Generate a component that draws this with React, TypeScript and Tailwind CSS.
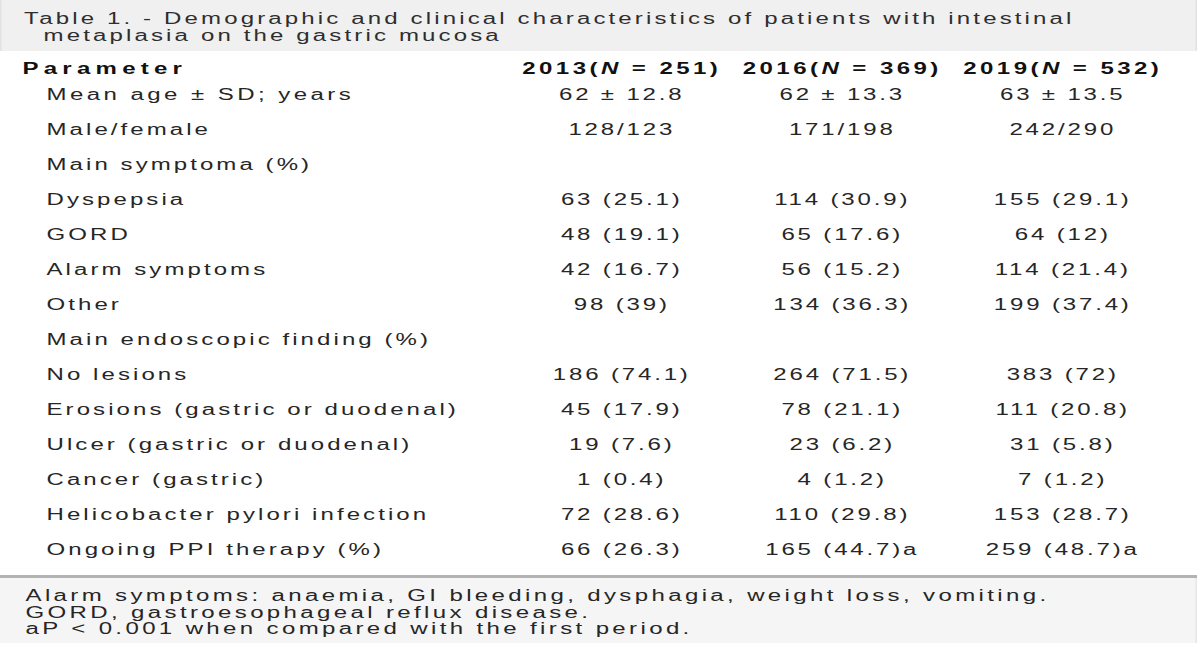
import React from "react";

const rows: [string, string, string, string][] = [
  ["Male/female", "128/123", "171/198", "242/290"],
  ["Main symptoma (%)", "", "", ""],
  ["Dyspepsia", "63 (25.1)", "114 (30.9)", "155 (29.1)"],
  ["GORD", "48 (19.1)", "65 (17.6)", "64 (12)"],
  ["Alarm symptoms", "42 (16.7)", "56 (15.2)", "114 (21.4)"],
  ["Other", "98 (39)", "134 (36.3)", "199 (37.4)"],
  ["Main endoscopic finding (%)", "", "", ""],
  ["No lesions", "186 (74.1)", "264 (71.5)", "383 (72)"],
  ["Erosions (gastric or duodenal)", "45 (17.9)", "78 (21.1)", "111 (20.8)"],
  ["Ulcer (gastric or duodenal)", "19 (7.6)", "23 (6.2)", "31 (5.8)"],
  ["Cancer (gastric)", "1 (0.4)", "4 (1.2)", "7 (1.2)"],
  ["Helicobacter pylori infection", "72 (28.6)", "110 (29.8)", "153 (28.7)"],
  ["Ongoing PPI therapy (%)", "66 (26.3)", "165 (44.7)a", "259 (48.7)a"],
];

export default function App() {
  return (
    <div className="w-[1200px] h-[646px] bg-white overflow-hidden">
      {/* the source table is a horizontally stretched rendering, hence scale-x */}
      <div className="w-[800px] scale-x-[1.5] origin-left text-[#262626] font-['Liberation_Sans',Arial,sans-serif] whitespace-nowrap">
        <div className="w-[798px] h-[51px] bg-[#f0f0f0] border-l-[1.5px] border-r border-[#e2e2e2] pl-[15px] pt-[10px] text-[16px] leading-[17px] tracking-[2.1px] text-[#2e2e2e]">
          <div>Table 1. - Demographic and clinical characteristics of patients with intestinal</div>
          <div className="pl-[13px]">metaplasia on the gastric mucosa</div>
        </div>
        <div className="pt-[4px] text-[16px]">
          <div className="grid grid-cols-[341px_147px_147px_147px] h-[28px] items-center font-bold text-[#111] tracking-[2.3px]">
            <div className="pl-[15px] tracking-[3.5px]">Parameter</div>
            <div className="text-center">2013(<i>N</i> = 251)</div>
            <div className="text-center">2016(<i>N</i> = 369)</div>
            <div className="text-center">2019(<i>N</i> = 532)</div>
          </div>
          <div className="grid grid-cols-[341px_147px_147px_147px] h-[24px] mb-[5px] items-center tracking-[1.9px]">
            <div className="pl-[31px] tracking-[2.3px]">Mean age ± SD; years</div>
            <div className="text-center">62 ± 12.8</div>
            <div className="text-center">62 ± 13.3</div>
            <div className="text-center">63 ± 13.5</div>
          </div>
          {rows.map((r, i) => (
            <div key={i} className="grid grid-cols-[341px_147px_147px_147px] h-[35px] items-center tracking-[1.9px]">
              <div className="pl-[31px] tracking-[2.05px]">{r[0]}</div>
              <div className="text-center">{r[1]}</div>
              <div className="text-center">{r[2]}</div>
              <div className="text-center">{r[3]}</div>
            </div>
          ))}
        </div>
        <div className="mt-[8px] w-[798px] h-[3px] bg-[#b3b3b3]" />
        <div className="w-[798px] h-[65px] bg-[#f5f5f5] border-r border-[#e6e6e6] pl-[17px] pt-[10px] text-[16px] leading-[16.5px] tracking-[2.25px] text-[#262626]">
          <div>Alarm symptoms: anaemia, GI bleeding, dysphagia, weight loss, vomiting.</div>
          <div>GORD, gastroesophageal reflux disease.</div>
          <div>aP &lt; 0.001 when compared with the first period.</div>
        </div>
      </div>
    </div>
  );
}
